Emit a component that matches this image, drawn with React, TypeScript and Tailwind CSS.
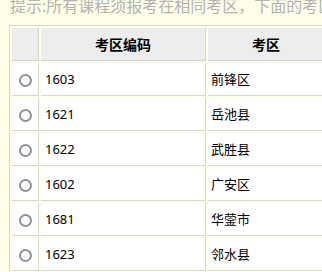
const rows = [
  { code: "1603", name: "前锋区" },
  { code: "1621", name: "岳池县" },
  { code: "1622", name: "武胜县" },
  { code: "1602", name: "广安区" },
  { code: "1681", name: "华蓥市" },
  { code: "1623", name: "邻水县" },
];

function Radio() {
  return <span className="block w-[13px] h-[13px] mx-auto rounded-full border-2 border-[#8f8f9d] bg-white" />;
}

export default function App() {
  return (
    <div
      className="w-[322px] h-[272px] overflow-hidden bg-[#fffee8] text-black"
      style={{ fontFamily: '"Noto Sans", "Noto Sans CJK SC", sans-serif' }}
    >
      <p className="-mt-[2px] pl-[10px] text-[16px] leading-[16px] whitespace-nowrap text-[#b3b3b3]">
        提示:所有课程须报考在相同考区，下面的考区仅供选择
      </p>

      <table className="ml-[9px] mt-[11px] w-[319px] table-fixed border-separate border-spacing-[2px] border border-[#d4d4d4] text-[13px]">
        <thead>
          <tr>
            <th className="w-[27px] h-[33px] bg-[#ededed] border-r border-b border-[#d2d2d2]" />
            <th className="w-[165px] h-[33px] bg-[#ededed] border-r border-b border-[#d2d2d2] text-[14px] font-bold">
              考区编码
            </th>
            <th className="w-[117px] h-[33px] bg-[#ededed] border-r border-b border-[#d2d2d2] text-[14px] font-bold">
              考区
            </th>
          </tr>
        </thead>
        <tbody>
          {rows.map((r) => (
            <tr key={r.code}>
              <td className="h-[33px] pt-[2px] bg-white border-r border-b border-[#d6d6d6]">
                <Radio />
              </td>
              <td className="h-[33px] pt-[2px] bg-white border-r border-b border-[#d6d6d6] pl-[4px]">{r.code}</td>
              <td className="h-[33px] pt-[2px] bg-white border-r border-b border-[#d6d6d6] pl-[3px]">{r.name}</td>
            </tr>
          ))}
        </tbody>
      </table>
    </div>
  );
}
